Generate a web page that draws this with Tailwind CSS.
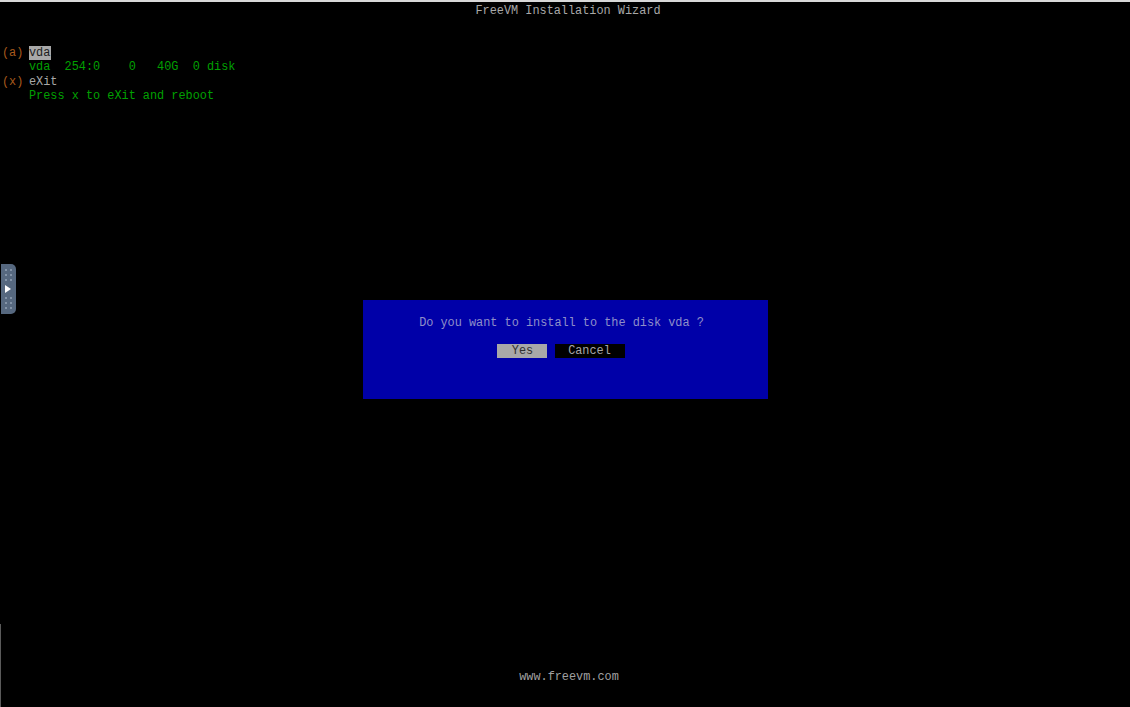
<!DOCTYPE html>
<html>
<head>
<meta charset="utf-8">
<script src="https://cdn.jsdelivr.net/npm/@tailwindcss/browser@4"></script>
</head>
<body class="bg-black">
<div class="relative w-[1130px] h-[707px] overflow-hidden bg-black flex flex-col border-t-2 border-[#d8d8d8] font-['Liberation_Mono',monospace] text-[11.86px] leading-[14.33px] whitespace-pre">
  <div class="text-center text-[#a8a8a8] pt-[2px] h-[44px] ml-[6px]">FreeVM Installation Wizard</div>
  <div class="pl-[2px] flex">
    <div class="w-[27px] text-[#a85a1c]">(a)

(x)</div>
    <div class="flex flex-col items-start">
      <div class="bg-[#a8a8a8] text-[#1c1c1c] w-[22px]">vda</div>
      <div class="text-[#00a000]">vda  254:0    0   40G  0 disk</div>
      <div class="text-[#a8a8a8]">eXit</div>
      <div class="text-[#00a000]">Press x to eXit and reboot</div>
    </div>
  </div>
  <div class="mt-[197px] ml-[363px] w-[405px] h-[99px] bg-[#0000a8] flex flex-col items-center pt-[16px]">
    <div class="text-[#8f8fc8] -ml-[8px]">Do you want to install to the disk vda ?</div>
    <div class="flex gap-[8px] mt-[13px] -ml-[10px]">
      <div class="w-[50px] h-[14px] bg-[#a8a8a8] text-center text-[#303030] pl-[2px]">Yes</div>
      <div class="w-[70px] h-[14px] bg-black text-center text-[#a8a8a8]">Cancel</div>
    </div>
  </div>
  <div class="mt-[271px] text-center text-[#a0a0a0] ml-[8px]">www.freevm.com</div>
  <div class="absolute left-0 top-[622px] bottom-0 w-[1px] bg-[#5a5a5a]"></div>
  <div class="absolute left-[1px] top-[262px] w-[15px] h-[50px] bg-[#56687f] rounded-r-[5px] flex flex-col items-center justify-center gap-[4px] pr-[1px]">
    <div class="grid grid-cols-2 gap-x-[3px] gap-y-[3px]">
      <span class="w-[2px] h-[2px] bg-[#8494a8]"></span><span class="w-[2px] h-[2px] bg-[#8494a8]"></span>
      <span class="w-[2px] h-[2px] bg-[#8494a8]"></span><span class="w-[2px] h-[2px] bg-[#8494a8]"></span>
      <span class="w-[2px] h-[2px] bg-[#8494a8]"></span><span class="w-[2px] h-[2px] bg-[#8494a8]"></span>
    </div>
    <svg width="6" height="8" viewBox="0 0 6 8"><path d="M0 0L6 4L0 8Z" fill="#ffffff"/></svg>
    <div class="grid grid-cols-2 gap-x-[3px] gap-y-[3px]">
      <span class="w-[2px] h-[2px] bg-[#8494a8]"></span><span class="w-[2px] h-[2px] bg-[#8494a8]"></span>
      <span class="w-[2px] h-[2px] bg-[#8494a8]"></span><span class="w-[2px] h-[2px] bg-[#8494a8]"></span>
      <span class="w-[2px] h-[2px] bg-[#8494a8]"></span><span class="w-[2px] h-[2px] bg-[#8494a8]"></span>
    </div>
  </div>
</div>
</body>
</html>
